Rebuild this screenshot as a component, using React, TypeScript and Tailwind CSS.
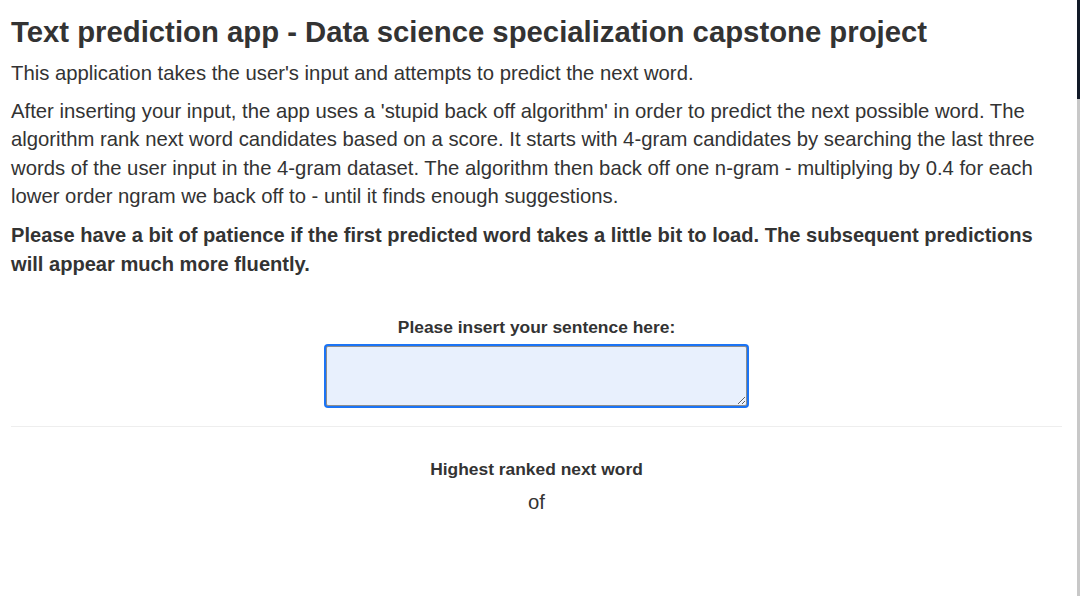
import React from "react";

export default function App() {
  return (
    <div className="flex h-[596px] w-[1080px] overflow-hidden bg-white text-[#333]" style={{ fontFamily: '"Liberation Sans", Arial, sans-serif' }}>
      <div className="flex-1 pl-[11px] pr-[15px]">
        <h2 className="mt-[14px] text-[29.3px] font-bold leading-[36px]">
          Text prediction app - Data science specialization capstone project
        </h2>
        <p className="mt-[9px] text-[20.3px] leading-[28.6px]">
          This application takes the user's input and attempts to predict the next word.
        </p>
        <p className="mt-[9px] text-[20.3px] leading-[28.6px]">
          After inserting your input, the app uses a 'stupid back off algorithm' in order to predict the next possible word. The algorithm rank next word candidates based on a score. It starts with 4-gram candidates by searching the last three words of the user input in the 4-gram dataset. The algorithm then back off one n-gram - multiplying by 0.4 for each lower order ngram we back off to - until it finds enough suggestions.
        </p>
        <p className="mt-[10px] text-[20.1px] font-bold leading-[28.6px]">
          Please have a bit of patience if the first predicted word takes a little bit to load. The subsequent predictions will appear much more fluently.
        </p>
        <div className="mt-[38px] flex flex-col items-center">
          <label className="text-[17.4px] font-bold leading-[22px]">Please insert your sentence here:</label>
          <textarea
            className="mt-[8px] h-[60px] w-[421px] rounded-[2px] border border-[#8d8d8d] bg-[#e8f0fd] shadow-[0_0_0_2px_#1b74f5] outline-none"
            defaultValue=""
          />
        </div>
        <hr className="mt-[20px] border-t border-[#eee]" />
        <div className="mt-[31px] flex flex-col items-center">
          <div className="text-[17.4px] font-bold leading-[22px]">Highest ranked next word</div>
          <div className="mt-[10px] text-[20.3px] leading-[24px]">of</div>
        </div>
      </div>
      <div className="flex w-[3px] flex-col">
        <div className="h-[99px] bg-[#111a28]" />
        <div className="flex-1 bg-[#c8c8c8]" />
      </div>
    </div>
  );
}
